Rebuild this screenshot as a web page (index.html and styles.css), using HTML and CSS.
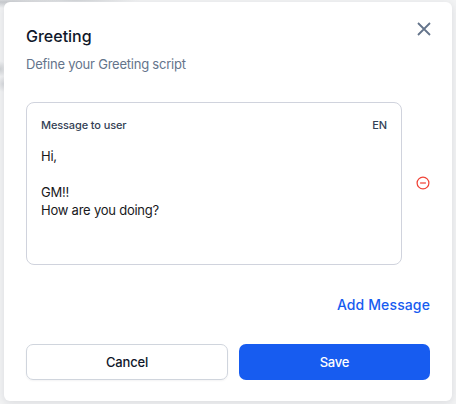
FILE: index.html
```html
<!DOCTYPE html>
<html lang="en">
<head>
<meta charset="utf-8">
<title>Greeting</title>
<link rel="stylesheet" href="styles.css">
</head>
<body>
<div class="backdrop" aria-hidden="true"></div>
<main class="modal">
  <header class="header">
    <div>
      <h1 class="title">Greeting</h1>
      <p class="subtitle">Define your Greeting script</p>
    </div>
    <button class="icon-button close" aria-label="Close">
      <svg width="14" height="14" viewBox="0 0 14 14" fill="none" stroke="#64748b" stroke-width="1.8"><path d="M1 1l12 12M13 1L1 13"/></svg>
    </button>
  </header>
  <div class="message-row">
    <section class="message">
      <div class="message-head"><span>Message to user</span><span>EN</span></div>
      <p class="message-text">Hi,

GM!!
How are you doing?</p>
    </section>
    <button class="icon-button remove" aria-label="Remove">
      <svg width="14" height="14" viewBox="0 0 14 14" fill="none" stroke="#f04438" stroke-width="1.25"><circle cx="7" cy="7" r="5.9"/><path d="M4.1 7h5.8"/></svg>
    </button>
  </div>
  <button class="add">Add Message</button>
  <footer class="actions">
    <button class="button cancel">Cancel</button>
    <button class="button save">Save</button>
  </footer>
</main>
</body>
</html>
```
FILE: styles.css
```css
* { box-sizing: border-box; }
body {
  margin: 0;
  height: 404px;
  padding: 2px 4px 3px;
  overflow: hidden;
  background: #f2f3f4;
  font-family: Inter, "Liberation Sans", sans-serif;
}
h1, p { margin: 0; }
button { font-family: inherit; padding: 0; border: 0; background: none; }
.backdrop {
  position: absolute;
  inset: 0;
  background:
    radial-gradient(ellipse 60px 6px at 0 2px, #c6c9cd, transparent),
    radial-gradient(ellipse 65px 4px at 75px 0, #d2d5d8, transparent),
    radial-gradient(ellipse 7px 8px at 0 69px, #d0d3d6, transparent),
    radial-gradient(ellipse 7px 8px at 3px 84px, #d9dbde, transparent);
}
.modal {
  position: relative;
  display: flex;
  flex-direction: column;
  height: 399px;
  padding: 20px 22px 21px;
  border-radius: 6px;
  background: #fff;
  box-shadow: 0 2px 8px rgba(16, 24, 40, .1);
}
.header { display: flex; justify-content: space-between; height: 80px; }
.title { font-size: 16px; line-height: 28px; font-weight: 500; color: #0f172a; }
.subtitle { margin-top: 4px; font-size: 13px; line-height: 21px; letter-spacing: -.23px; color: #64748b; }
.icon-button { display: block; width: 14px; height: 14px; flex: none; }
.icon-button svg { display: block; }
.close { margin: 0 -1px 0 0; }
.message-row { display: flex; align-items: center; gap: 14px; }
.message {
  width: 376px;
  height: 163px;
  padding: 14px;
  border: 1px solid #d0d3dd;
  border-radius: 8px;
}
.message-head {
  display: flex;
  justify-content: space-between;
  font-size: 11px;
  line-height: 16px;
  font-weight: 500;
  letter-spacing: -.12px;
  color: #334155;
}
.message-text { margin-top: 14px; white-space: pre-line; font-size: 13px; line-height: 18px; letter-spacing: -.23px; color: #18181b; }
.remove { margin: 0 -1px 2px 0; }
.add { align-self: flex-end; margin-top: 30px; font-size: 14px; line-height: 20px; font-weight: 500; color: #175cf0; letter-spacing: .12px; }
.actions { display: flex; gap: 11px; margin-top: auto; }
.button { height: 36px; border-radius: 7px; font-size: 13px; font-weight: 500; letter-spacing: -.2px; }
.cancel { width: 202px; border: 1px solid #d0d5dd; color: #0f172a; box-shadow: 0 1px 2px rgba(16, 24, 40, .05); }
.save { width: 191px; background: #175cf0; color: #fff; }
```
